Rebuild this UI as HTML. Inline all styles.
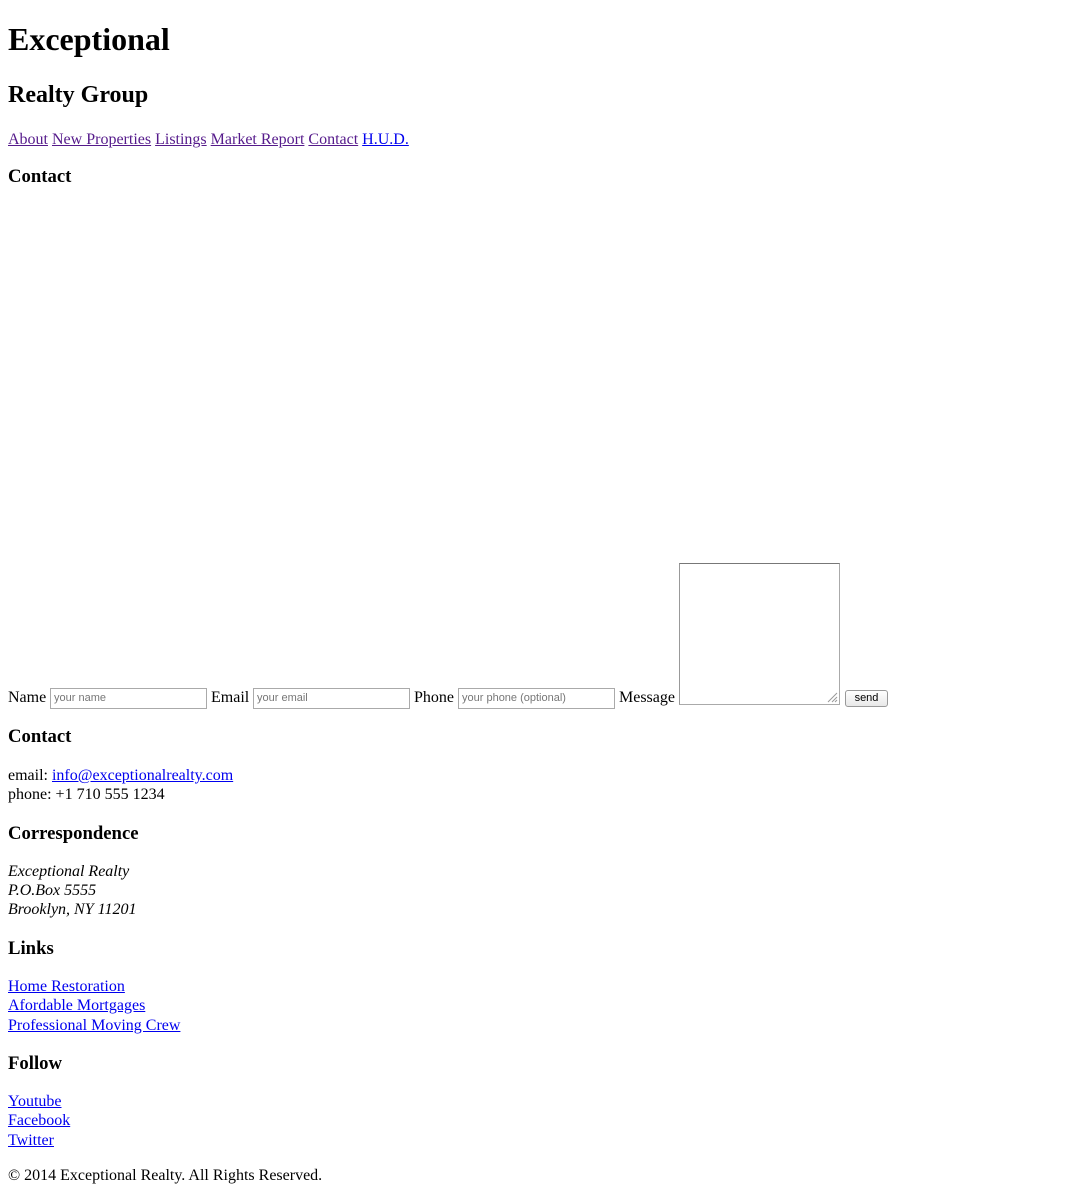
<!DOCTYPE html>
<html><head><meta charset="utf-8"><style>
html,body{margin:0;padding:0;background:#fff;width:1080px;height:1193px;overflow:hidden}
body{font-family:"Liberation Serif",serif;font-size:16px;color:#000;position:relative}
.a{position:absolute;left:8px;white-space:nowrap;line-height:19px}
a{color:#0000ee;text-decoration:underline}
a.v{color:#551a8b}
.h1{font-size:32px;font-weight:bold;line-height:37px}
.h2{font-size:24px;font-weight:bold;line-height:28px}
.h3{font-size:18.72px;font-weight:bold;line-height:22px}
.inp{position:absolute;border:1px solid #aaa;font-family:"Liberation Sans",sans-serif;font-size:11px;color:#777;line-height:19px;padding-left:3px;box-sizing:border-box;width:157px;height:21px}
.lbl{position:absolute;line-height:19px}
</style></head><body>
<div class="a h1" style="top:21px">Exceptional</div>
<div class="a h2" style="top:81px">Realty Group</div>
<div class="a" style="top:130px"><a class="v">About</a> <a class="v">New Properties</a> <a class="v">Listings</a> <a class="v">Market Report</a> <a class="v">Contact</a> <a>H.U.D.</a></div>
<div class="a h3" style="top:166px">Contact</div>

<div class="lbl" style="left:8px;top:688px">Name</div>
<div class="inp" style="left:50px;top:688px">your name</div>
<div class="lbl" style="left:211px;top:688px">Email</div>
<div class="inp" style="left:253px;top:688px">your email</div>
<div class="lbl" style="left:414px;top:688px">Phone</div>
<div class="inp" style="left:458px;top:688px">your phone (optional)</div>
<div class="lbl" style="left:619px;top:688px">Message</div>
<div style="position:absolute;left:679px;top:563px;width:159px;height:140px;border:1px solid #888;border-color:#777 #aaa #aaa #999"></div>
<svg style="position:absolute;left:827px;top:692px" width="11" height="11"><path d="M1 10L10 1M5 10L10 5M8 10L10 8" stroke="#999" stroke-width="1"/></svg>
<div style="position:absolute;left:845px;top:690px;width:41px;height:15px;border:1px solid #999;border-radius:3px;background:linear-gradient(#fff,#e8e8e8);font-family:'Liberation Sans',sans-serif;font-size:11px;text-align:center;line-height:15px">send</div>

<div class="a h3" style="top:726px">Contact</div>
<div class="a" style="top:766px">email: <a>info@exceptionalrealty.com</a></div>
<div class="a" style="top:785px">phone: +1 710 555 1234</div>
<div class="a h3" style="top:823px">Correspondence</div>
<div class="a" style="top:862px;font-style:italic">Exceptional Realty</div>
<div class="a" style="top:881px;font-style:italic">P.O.Box 5555</div>
<div class="a" style="top:900px;font-style:italic">Brooklyn, NY 11201</div>
<div class="a h3" style="top:938px">Links</div>
<div class="a" style="top:977px"><a>Home Restoration</a></div>
<div class="a" style="top:996px"><a>Afordable Mortgages</a></div>
<div class="a" style="top:1016px"><a>Professional Moving Crew</a></div>
<div class="a h3" style="top:1053px">Follow</div>
<div class="a" style="top:1092px"><a>Youtube</a></div>
<div class="a" style="top:1111px"><a>Facebook</a></div>
<div class="a" style="top:1131px"><a>Twitter</a></div>
<div class="a" style="top:1166px">© 2014 Exceptional Realty. All Rights Reserved.</div>
</body></html>
